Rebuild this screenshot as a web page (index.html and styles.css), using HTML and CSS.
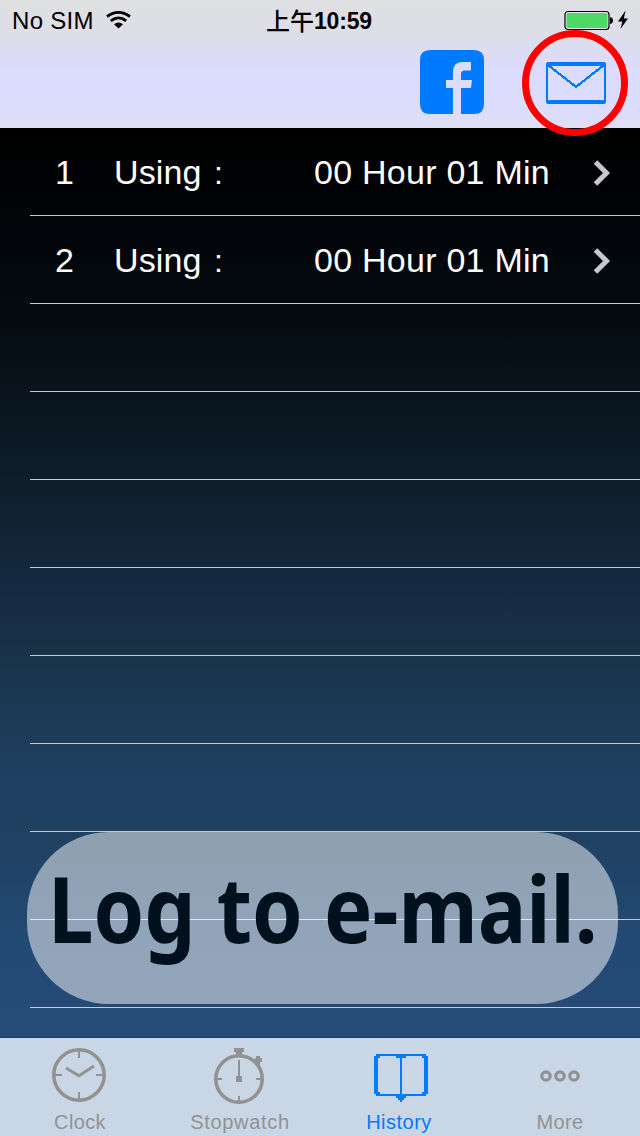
FILE: index.html
```html
<!DOCTYPE html>
<html lang="en">
<head>
<meta charset="utf-8">
<title>History</title>
<link rel="stylesheet" href="styles.css">
</head>
<body>
<div class="phone">
  <header class="header">
    <div class="status">
      <div class="carrier"><span class="carrier-name">No SIM</span>
        <svg class="wifi" width="26" height="20" viewBox="0 0 26 20"><g fill="none" stroke="#000" stroke-width="2.8"><path d="M2 6.5Q13.5 -1.8 25 6.5"/><path d="M5.8 10.8Q13.5 5 21.2 10.8"/></g><path d="M9 14.2Q13.5 10.8 18 14.2L13.5 18.5Z"/></svg>
      </div>
      <div class="time"><span class="meridiem">上午</span><span>10:59</span></div>
      <svg class="battery" width="66" height="24" viewBox="0 0 66 24"><rect x="1" y="2.5" width="44" height="18" rx="3" fill="#e8ebed" stroke="#000" stroke-width="1.2"/><rect x="2.5" y="4" width="41" height="15" rx="1.6" fill="#4cd964"/><path d="M46 8Q49 8.5 49 11.5T46 15Z"/><path d="M61.6 1.5L54 12.5H58.3L56.5 20L64 9.5H59.8Z"/></svg>
    </div>
    <nav class="actions">
      <svg width="64" height="64" viewBox="0 0 64 64"><path fill="#007aff" d="M10 0H54Q64 0 64 10V54Q64 64 54 64H41V38H51L52 30H41V24Q41 20.5 45 20.5H51V12H42Q33 12 33 22V30H26V38H33V64H10Q0 64 0 54V10Q0 0 10 0Z"/></svg>
      <svg class="mail" width="60" height="42" viewBox="0 0 60 42" shape-rendering="crispEdges"><path fill="#007aff" d="M1 0H59V1H60V41H59V42H1V41H0V1H1ZM2 4V38H58V4Z" fill-rule="evenodd"/><path d="M2 3L27 22.5L30 25L33 22.5L58 3" fill="none" stroke="#007aff" stroke-width="2.3"/></svg>
      <span class="highlight"></span>
    </nav>
  </header>
  <main class="list">
    <div class="row"><span class="num">1</span><span class="label">Using</span><span class="colon">:</span><span class="duration">00 Hour 01 Min</span><svg class="chevron" width="18" height="26" viewBox="0 0 18 26"><path d="M2.5 2L13.5 13L2.5 24" fill="none" stroke="#c7c7cc" stroke-width="5"/></svg></div>
    <div class="row"><span class="num">2</span><span class="label">Using</span><span class="colon">:</span><span class="duration">00 Hour 01 Min</span><svg class="chevron" width="18" height="26" viewBox="0 0 18 26"><path d="M2.5 2L13.5 13L2.5 24" fill="none" stroke="#c7c7cc" stroke-width="5"/></svg></div>
    <div class="row"></div><div class="row"></div><div class="row"></div><div class="row"></div><div class="row"></div><div class="row"></div><div class="row"></div><div class="row"></div>
    <div class="caption"><span>Log to e-mail.</span></div>
  </main>
  <footer class="tabs">
    <div class="tab"><svg width="56" height="60" viewBox="0 0 56 60" fill="none" stroke="#929292"><circle cx="27" cy="29" r="25.2" stroke-width="3.6"/><path d="M27 5V12M27 46V54M3 29H10M44 29H52" stroke-width="2"/><path d="M14 22L27 29.8L42 20" stroke-width="3"/></svg><span class="clock">Clock</span></div>
    <div class="tab"><svg width="56" height="60" viewBox="0 0 56 60" fill="none" stroke="#929292"><circle cx="27" cy="33" r="23.2" stroke-width="3.6"/><path d="M27 14V33M27 50V56M4 33H10M44 33H51" stroke-width="2"/><path fill="#929292" stroke="none" d="M22 2H32V6H30V9H24V6H22ZM24 30H30V36H24ZM40 14L44 12V10H48V12H50V16H48V20H46Z"/></svg><span class="stopwatch">Stopwatch</span></div>
    <div class="tab active"><svg width="56" height="60" viewBox="-2 0 56 60" shape-rendering="crispEdges"><path fill="#007aff" fill-rule="evenodd" d="M2 8H52V10H54V48H52V50H32V52H30V54H28V56H26V54H24V52H22V50H2V48H0V10H2ZM6 10V12H4V46H6V48H26V12H22V10ZM32 10V12H28V48H48V46H50V12H48V10Z"/></svg><span class="history">History</span></div>
    <div class="tab"><svg width="56" height="60" viewBox="-1 0 56 60" fill="none" stroke="#929292" stroke-width="3.2"><circle cx="13" cy="30" r="4.2"/><circle cx="27" cy="30" r="4.2"/><circle cx="41" cy="30" r="4.2"/></svg><span class="more">More</span></div>
  </footer>
</div>
</body>
</html>
```
FILE: styles.css
```css
* { box-sizing: border-box; }
body { margin: 0; font-family: "Liberation Sans", "Noto Sans CJK TC", sans-serif; }
svg { display: block; }
.phone { width: 640px; height: 1136px; display: flex; flex-direction: column; overflow: hidden; }
.header { height: 128px; background: linear-gradient(#dfe0e1 0, #dedee7 30px, #dcdcf6 55px, #dcdcfe 75px, #dcdcfd 110px, #dedef3 128px); }
.status { height: 40px; display: grid; grid-template-columns: 266px 298px 76px; align-items: start; }
.carrier { display: flex; padding-left: 12px; font-size: 24px; line-height: 28px; padding-top: 7px; }
.carrier-name { width: 93px; letter-spacing: 0.3px; white-space: nowrap; }
.wifi { margin-top: 3px; }
.time { display: flex; padding-top: 7px; font-size: 23px; line-height: 28px; font-weight: 700; letter-spacing: -0.2px; }
.meridiem { width: 48px; font: 500 24px/28px "Noto Sans CJK TC", sans-serif; letter-spacing: 0; margin-top: -1px; }
.battery { margin-top: 9px; }
.actions { display: flex; padding: 10px 0 0 420px; position: relative; }
.mail { margin: 12px 0 0 62px; }
.highlight { position: absolute; z-index: 2; left: 522px; top: -10px; width: 106px; height: 106px; border: 7px solid #f00; border-radius: 50%; }
.list { height: 909px; flex: none; position: relative; overflow: hidden; background: linear-gradient(#000 0, #010306 75px, #040b11 190px, #0e1e2b 355px, #14283e 445px, #193349 530px, #1e4060 640px, #1f4262 715px, #234975 810px, #254b76 909px); }
.row { height: 88px; margin-left: 30px; border-bottom: 1px solid #c8c7cc; display: grid; grid-template-columns: 84px 100px 100px 279px 18px; align-items: center; color: #fff; font-size: 34px; line-height: 40px; padding-top: 1px; white-space: nowrap; }
.num { padding-left: 25px; }
.label { letter-spacing: 0.1px; }
.colon { font-size: 32px; position: relative; top: 1px; }
.duration { letter-spacing: 0.25px; }
.caption { position: absolute; left: 27px; top: 704px; width: 591px; height: 172px; border-radius: 82px / 82px; background: rgba(255,255,255,.5); color: #00101c; font: 700 91px/152px "Noto Sans", sans-serif; white-space: nowrap; padding-left: 21px; }
.caption span { display: inline-block; transform: scaleX(.893); transform-origin: left; }
.tabs { flex: 1; background: #c9d6e5; border-top: 1px solid #1d3c61; display: grid; grid-template-columns: repeat(4, 160px); color: #929292; }
.tab { display: flex; flex-direction: column; align-items: center; padding-top: 8px; font-size: 20px; line-height: 24px; }
.tab span { margin-top: 4px; letter-spacing: .35px; }
.tab .stopwatch { letter-spacing: .7px; }
.tab .history { margin-left: -2px; letter-spacing: .5px; }
.active { color: #007aff; }
.chevron { margin-top: 1px; }
```
